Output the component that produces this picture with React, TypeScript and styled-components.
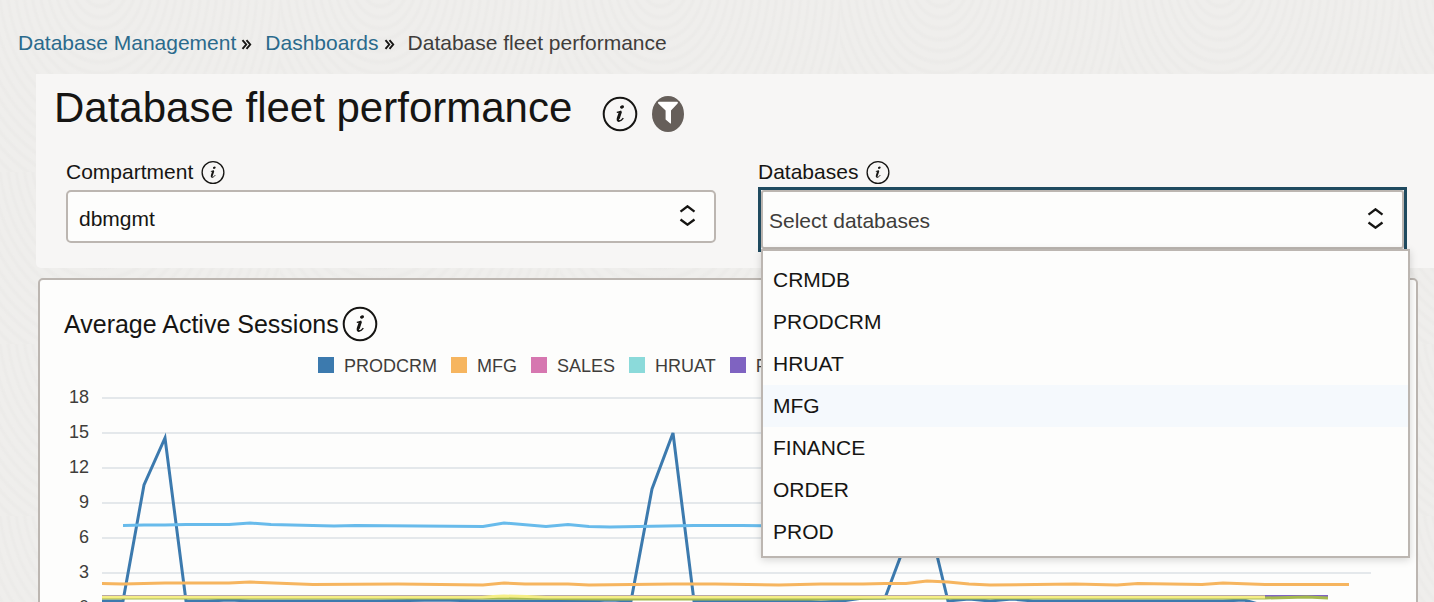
import React, { useState } from 'react';
import styled, { createGlobalStyle } from 'styled-components';

const color = {
  page: '#efeeec',
  pageRing: '#ecebe9',
  panel: '#f7f6f5',
  surface: '#fdfdfc',
  border: '#bcb6b1',
  text: '#161513',
  muted: '#3f3d3b',
  link: '#2a6a8c',
  focus: '#1f4a5f',
  hover: '#f5f9fd',
  grid: '#e4e8eb',
};

const GlobalStyle = createGlobalStyle`
  *, *::before, *::after { box-sizing: border-box; }
  body {
    margin: 0;
    color: ${color.text};
    background: ${color.page};
    font: 21px/24px "Liberation Sans", Arial, sans-serif;
  }
  input, select, button { font: inherit; color: inherit; }
`;

const Page = styled.main`
  height: 100vh;
  overflow: hidden;
  background-color: ${color.page};
  background-image: repeating-radial-gradient(
    ellipse 100px 140px at 100px -24px,
    transparent 0 3%,
    ${color.pageRing} 5% 6%,
    transparent 8%
  );
  background-size: 280px 172px;
`;

const Breadcrumbs = styled.nav`
  padding: 31px 18px 19px;
`;

const CrumbList = styled.ol`
  display: flex;
  flex-wrap: wrap;
  align-items: center;
  margin: 0;
  padding: 0;
  list-style: none;
`;

const Crumb = styled.li`
  display: flex;
  align-items: center;
  color: ${color.muted};
`;

const CrumbLink = styled.a`
  color: ${color.link};
  text-decoration: none;
`;

const Separator = styled.svg`
  width: 11px;
  height: 11px;
  margin: 2px 13px 0 5px;
`;

const Header = styled.header`
  margin-left: 36px;
  background: ${color.panel};
  border-radius: 0 0 0 5px;
`;

const TitleRow = styled.div`
  display: flex;
  align-items: flex-start;
  padding: 10px 18px 16px;
`;

const Title = styled.h1`
  margin: 0;
  font-size: 42px;
  line-height: 48px;
  font-weight: 400;
`;

const TitleActions = styled.div`
  display: flex;
  align-items: center;
  gap: 14px;
  margin: 12px 0 0 30px;
`;

const IconButton = styled.button<{ $size: number }>`
  display: inline-flex;
  flex: none;
  align-items: center;
  justify-content: center;
  width: ${(p) => p.$size}px;
  height: ${(p) => p.$size}px;
  padding: 0;
  border: 0;
  background: none;
`;

const FilterButton = styled.button`
  display: flex;
  align-items: flex-start;
  justify-content: center;
  width: 32px;
  height: 36px;
  padding: 5px 0 0;
  border: 0;
  border-radius: 50%;
  background: #665f5a;
`;

const Filters = styled.form`
  display: grid;
  grid-template-columns: 1fr 1fr;
  gap: 42px;
  align-items: start;
  padding: 12px 26px 19px 30px;
`;

const LabelRow = styled.div`
  display: flex;
  align-items: center;
  gap: 8px;
  margin-bottom: 6px;
`;

const Control = styled.div<{ $focused?: boolean }>`
  position: relative;
  display: flex;
  margin: ${(p) => (p.$focused ? '0 4px 0 3px' : '0')};
  box-shadow: ${(p) => (p.$focused ? `0 0 0 3px ${color.focus}` : 'none')};
`;

const Select = styled.select`
  width: 100%;
  height: 53px;
  padding: 4px 48px 0 11px;
  border: 2px solid ${color.border};
  border-radius: 5px;
  background: ${color.surface};
  appearance: none;
  outline: none;
`;

const Combo = styled.input`
  width: 100%;
  height: 59px;
  padding: 2px 48px 0 6px;
  border: 2px solid ${color.border};
  border-radius: 3px;
  background: ${color.surface};
  outline: none;
  &::placeholder { color: ${color.muted}; opacity: 1; }
`;

const Chevrons = styled.svg`
  position: absolute;
  top: 0;
  bottom: 0;
  right: 20px;
  width: 17px;
  height: 23px;
  margin: auto 0;
  padding-bottom: 2px;
  pointer-events: none;
`;

const Menu = styled.ul`
  position: absolute;
  z-index: 2;
  top: 100%;
  left: 0;
  right: -6px;
  margin: 0;
  padding: 8px 0 3px;
  border: 2px solid ${color.border};
  background: ${color.surface};
  box-shadow: 0 2px 8px rgba(0, 0, 0, 0.16);
  list-style: none;
`;

const Option = styled.li<{ $active: boolean }>`
  padding: 9px 10px;
  background: ${(p) => (p.$active ? color.hover : 'transparent')};
`;

const Card = styled.section`
  margin: 10px 16px 0 38px;
  padding: 26px 45px 24px 24px;
  border: 2px solid ${color.border};
  border-radius: 5px;
  background: ${color.surface};
`;

const CardHeader = styled.div`
  display: flex;
  align-items: center;
  gap: 3px;
`;

const CardTitle = styled.h2`
  margin: 0;
  font-size: 25px;
  line-height: 36px;
  font-weight: 400;
`;

const Legend = styled.ul`
  display: flex;
  gap: 14px;
  margin: 12px 0 20px;
  padding: 0 0 0 254px;
  color: ${color.muted};
  font-size: 18px;
  list-style: none;
`;

const LegendItem = styled.li`
  display: flex;
  align-items: center;
  gap: 10px;
`;

const Swatch = styled.span<{ $fill: string }>`
  width: 16px;
  height: 16px;
  margin-bottom: 2px;
  background: ${(p) => p.$fill};
`;

const Chart = styled.div`
  display: flex;
  gap: 13px;
`;

const Axis = styled.div`
  flex: none;
  width: 25px;
  margin-top: -18px;
  color: ${color.muted};
  font-size: 18px;
  line-height: 35px;
  text-align: right;
`;

const Plot = styled.svg`
  flex: 1;
  min-width: 0;
  height: 212px;
  overflow: visible;
`;

const InfoIcon = ({ size }: { size: number }) => (
  <svg width={size} height={size} viewBox="0 0 36 36" fill="none" stroke={color.text} aria-hidden="true">
    <circle cx="18" cy="18" r="16.3" strokeWidth="2" />
    <ellipse cx="20" cy="10.900" rx="2.100" ry="1.600" fill={color.text} stroke="none" transform="rotate(-20 20 10.900)" />
    <path d="M14.800 16.400c1.700-.1 3.200-.5 4.600-1.300" strokeWidth="1.400" />
    <path d="M18.500 15.600l-2.100 6.400c-.5 1.800-.3 2.600.8 2.300" strokeWidth="3" />
    <path d="M16.600 25c1.900.1 3.400-1 4.700-2.900" strokeWidth="1.400" />
  </svg>
);

const ChevronIcon = () => (
  <Chevrons viewBox="0 0 17 21" fill="none" stroke={color.text} strokeWidth="2.300" aria-hidden="true">
    <path d="M1.500 6.700L8.500 1.300l7 5.400M1.500 14.500l7 5.200 7-5.200" />
  </Chevrons>
);

const CrumbSeparator = () => (
  <Separator viewBox="0 0 11 11" fill="none" stroke={color.text} strokeWidth="1.900" aria-hidden="true">
    <path d="M1.500 1.200l3.700 4.300-3.700 4.300M5.500 1.200l3.700 4.300-3.700 4.300" />
  </Separator>
);

const databases = ['CRMDB', 'PRODCRM', 'HRUAT', 'MFG', 'FINANCE', 'ORDER', 'PROD'];

const legend = [
  { name: 'PRODCRM', fill: '#3c7aae' },
  { name: 'MFG', fill: '#f6b55f' },
  { name: 'SALES', fill: '#d677b0' },
  { name: 'HRUAT', fill: '#8bdada' },
  { name: 'FINANCE', fill: '#7f63c1' },
];

const ticks = [18, 15, 12, 9, 6, 3, 0];

const series = [
  {
    stroke: '#3c7aae',
    points:
      '0,203 21,203 42,87 63,40 84,203 106,203 127,202 148,203 190,203 275,203 338,202 380,203 487,203 508,202 529,203 550,91 571,35 592,203 698,203 719,204 740,203 761,200 783,200 804,144 825,116 846,203 867,201 888,203 910,201 931,203 1015,203 1121,203 1142,202 1160,207',
  },
  {
    stroke: '#68bbeb',
    points:
      '21,127.500 42,127 63,127 84,126.500 127,126.500 148,125 169,126.500 232,128 254,127.500 317,128 381,128.500 402,125 444,128.500 466,126.500 487,128.500 508,129 592,127.500 640,127.500 680,128 740,127 1247,128',
  },
  {
    stroke: '#f6b55f',
    points:
      '0,185.500 21,186 63,185 127,185 148,184 211,186.500 296,186 381,187 402,185 423,186 466,186 487,187 571,186 613,186 677,187 719,186 761,186 783,185.500 804,185.500 825,183 846,184 867,186 888,187 973,186 1015,187 1036,185.500 1100,186.500 1121,185 1163,186.500 1247,186.500',
  },
  { stroke: '#7f63c1', points: '0,198.500 1226,198.500' },
  { stroke: '#a5b94f', points: '0,200 402,200 508,201 719,201 783,200 1163,200 1205,199 1226,200' },
  { stroke: '#f5ee86', points: '0,199 380,199 402,198 444,199 1163,199' },
];

export default function App() {
  const [active, setActive] = useState('MFG');

  return (
    <Page>
      <GlobalStyle />
      <Breadcrumbs aria-label="Breadcrumb">
        <CrumbList>
          <Crumb>
            <CrumbLink href="#management">Database Management</CrumbLink>
            <CrumbSeparator />
          </Crumb>
          <Crumb>
            <CrumbLink href="#dashboards">Dashboards</CrumbLink>
            <CrumbSeparator />
          </Crumb>
          <Crumb aria-current="page">Database fleet performance</Crumb>
        </CrumbList>
      </Breadcrumbs>

      <Header>
        <TitleRow>
          <Title>Database fleet performance</Title>
          <TitleActions>
            <IconButton type="button" $size={36} aria-label="About this dashboard">
              <InfoIcon size={36} />
            </IconButton>
            <FilterButton type="button" aria-label="Filter">
              <svg width="22" height="23" viewBox="0 0 22 23" fill="#fff" aria-hidden="true">
                <path d="M1.800.8h18.400q1.300.4.400 1.600L14 9.600v12.600q-.4.600-1 .1L8.600 18.500V9.600L1.200 2.400Q.5 1.200 1.800.8z" />
              </svg>
            </FilterButton>
          </TitleActions>
        </TitleRow>

        <Filters>
          <div>
            <LabelRow>
              <label htmlFor="compartment">Compartment</label>
              <IconButton type="button" $size={24} aria-label="About compartment">
                <InfoIcon size={25} />
              </IconButton>
            </LabelRow>
            <Control>
              <Select id="compartment" defaultValue="dbmgmt">
                <option>dbmgmt</option>
              </Select>
              <ChevronIcon />
            </Control>
          </div>
          <div>
            <LabelRow>
              <label htmlFor="databases">Databases</label>
              <IconButton type="button" $size={24} aria-label="About databases">
                <InfoIcon size={25} />
              </IconButton>
            </LabelRow>
            <Control $focused>
              <Combo
                id="databases"
                type="text"
                role="combobox"
                placeholder="Select databases"
                aria-expanded="true"
                aria-controls="database-options"
              />
              <ChevronIcon />
              <Menu id="database-options" role="listbox" aria-label="Databases">
                {databases.map((name) => (
                  <Option
                    key={name}
                    role="option"
                    aria-selected={name === active}
                    $active={name === active}
                    onMouseEnter={() => setActive(name)}
                  >
                    {name}
                  </Option>
                ))}
              </Menu>
            </Control>
          </div>
        </Filters>
      </Header>

      <Card>
        <CardHeader>
          <CardTitle>Average Active Sessions</CardTitle>
          <IconButton type="button" $size={36} aria-label="About average active sessions">
            <InfoIcon size={36} />
          </IconButton>
        </CardHeader>
        <Legend>
          {legend.map((item) => (
            <LegendItem key={item.name}>
              <Swatch $fill={item.fill} />
              {item.name}
            </LegendItem>
          ))}
        </Legend>
        <Chart>
          <Axis>
            {ticks.map((tick) => (
              <div key={tick}>{tick}</div>
            ))}
          </Axis>
          <Plot viewBox="0 0 1269 212" preserveAspectRatio="none" role="img" aria-label="Average active sessions">
            {ticks.map((tick, i) => (
              <line key={tick} x1="0" x2="1269" y1={i * 35} y2={i * 35} stroke={color.grid} strokeWidth="2" />
            ))}
            {series.map((s) => (
              <polyline
                key={s.stroke}
                points={s.points}
                fill="none"
                stroke={s.stroke}
                strokeWidth="3"
                vectorEffect="non-scaling-stroke"
              />
            ))}
          </Plot>
        </Chart>
      </Card>
    </Page>
  );
}
